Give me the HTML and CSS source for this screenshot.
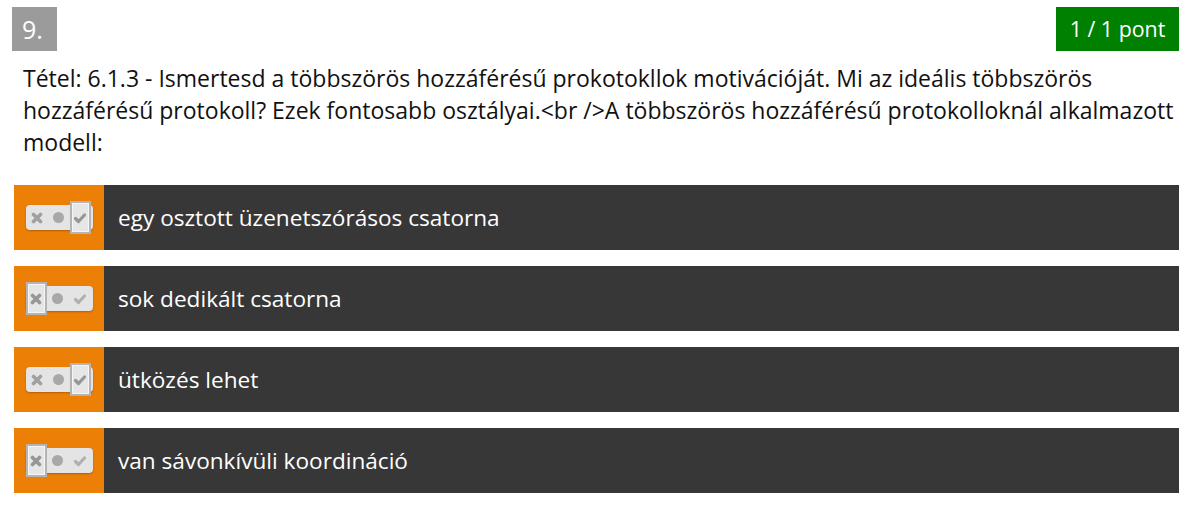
FILE: index.html
```html
<!DOCTYPE html>
<html>
<head>
<meta charset="utf-8">
<link rel="stylesheet" href="styles.css">
</head>
<body>
<div class="header">
  <div class="qnum">9.</div>
  <div class="score">1 / 1 pont</div>
</div>
<div class="question">Tétel: 6.1.3 - Ismertesd a többszörös hozzáférésű prokotokllok motivációját. Mi az ideális többszörös hozzáférésű protokoll? Ezek fontosabb osztályai.&lt;br /&gt;A többszörös hozzáférésű protokolloknál alkalmazott modell:</div>
<div class="answers">
  <div class="answer">
    <div class="tog-cell"><div class="toggle sel-yes"><span class="opt x"><svg viewBox="0 0 12 12" width="12" height="12"><path d="M2.5 2.5 L9.5 9.5 M9.5 2.5 L2.5 9.5" stroke="#a0a0a0" stroke-width="3.6" stroke-linecap="round"/></svg></span><span class="opt dot"><i></i></span><span class="opt chk"><svg viewBox="0 0 14 12" width="14" height="12"><path d="M2.5 6.5 L5.5 9.5 L11.5 3" fill="none" stroke="#969696" stroke-width="3.2" stroke-linecap="round" stroke-linejoin="round"/></svg></span></div></div>
    <div class="label">egy osztott üzenetszórásos csatorna</div>
  </div>
  <div class="answer">
    <div class="tog-cell"><div class="toggle sel-no"><span class="opt x"><svg viewBox="0 0 12 12" width="12" height="12"><path d="M2.5 2.5 L9.5 9.5 M9.5 2.5 L2.5 9.5" stroke="#969696" stroke-width="3.6" stroke-linecap="round"/></svg></span><span class="opt dot"><i></i></span><span class="opt chk"><svg viewBox="0 0 14 12" width="14" height="12"><path d="M2.5 6.5 L5.5 9.5 L11.5 3" fill="none" stroke="#b0b0b0" stroke-width="3.2" stroke-linecap="round" stroke-linejoin="round"/></svg></span></div></div>
    <div class="label">sok dedikált csatorna</div>
  </div>
  <div class="answer">
    <div class="tog-cell"><div class="toggle sel-yes"><span class="opt x"><svg viewBox="0 0 12 12" width="12" height="12"><path d="M2.5 2.5 L9.5 9.5 M9.5 2.5 L2.5 9.5" stroke="#a0a0a0" stroke-width="3.6" stroke-linecap="round"/></svg></span><span class="opt dot"><i></i></span><span class="opt chk"><svg viewBox="0 0 14 12" width="14" height="12"><path d="M2.5 6.5 L5.5 9.5 L11.5 3" fill="none" stroke="#969696" stroke-width="3.2" stroke-linecap="round" stroke-linejoin="round"/></svg></span></div></div>
    <div class="label">ütközés lehet</div>
  </div>
  <div class="answer">
    <div class="tog-cell"><div class="toggle sel-no"><span class="opt x"><svg viewBox="0 0 12 12" width="12" height="12"><path d="M2.5 2.5 L9.5 9.5 M9.5 2.5 L2.5 9.5" stroke="#969696" stroke-width="3.6" stroke-linecap="round"/></svg></span><span class="opt dot"><i></i></span><span class="opt chk"><svg viewBox="0 0 14 12" width="14" height="12"><path d="M2.5 6.5 L5.5 9.5 L11.5 3" fill="none" stroke="#b0b0b0" stroke-width="3.2" stroke-linecap="round" stroke-linejoin="round"/></svg></span></div></div>
    <div class="label">van sávonkívüli koordináció</div>
  </div>
</div>
</body>
</html>
```
FILE: styles.css
```css
* { box-sizing: border-box; }
body {
  margin: 0;
  background: #fff;
  font-family: "Open Sans", "Liberation Sans", sans-serif;
  color: #111;
}
.header {
  display: flex;
  justify-content: space-between;
  align-items: flex-start;
  padding: 7px 9px 0 12px;
}
.qnum {
  width: 45px;
  height: 44px;
  background: #9b9b9b;
  color: #fff;
  font-size: 25px;
  line-height: 44px;
  padding-left: 10px;
}
.score {
  width: 123px;
  height: 44px;
  background: #008000;
  color: #fff;
  font-size: 21.4px;
  line-height: 44px;
  text-align: center;
}
.question {
  margin: 11px 4px 0 23px;
  font-size: 23px;
  line-height: 32px;
  color: #111;
}
.answers {
  display: flex;
  flex-direction: column;
  gap: 16px;
  margin: 27px 9px 0 14px;
}
.answer {
  display: flex;
  height: 65px;
  background: #373737;
}
.tog-cell {
  width: 90px;
  background: #ec7f06;
  display: flex;
  align-items: center;
  justify-content: center;
}
.toggle {
  position: relative;
  width: 67px;
  height: 25px;
  border-radius: 4px;
  background: #e4e4e4;
  box-shadow: 0 1px 2px rgba(0,0,0,0.25);
  display: flex;
  align-items: center;
}
.opt {
  width: 22px;
  height: 25px;
  display: flex;
  align-items: center;
  justify-content: center;
}
.dot i {
  display: block;
  width: 11px;
  height: 11px;
  border-radius: 50%;
  background: #a8a8a8;
}
.sel-yes .chk, .sel-no .x {
  position: relative;
  height: 33px;
  width: 21px;
  background: #e6e6e6;
  border: 2px solid #b4b4b4;
  box-shadow: inset 0 0 0 1px #f5f5f5;
}
.label {
  flex: 1;
  display: flex;
  align-items: center;
  padding-left: 14px;
  color: #fff;
  font-size: 22.6px;
}
```
